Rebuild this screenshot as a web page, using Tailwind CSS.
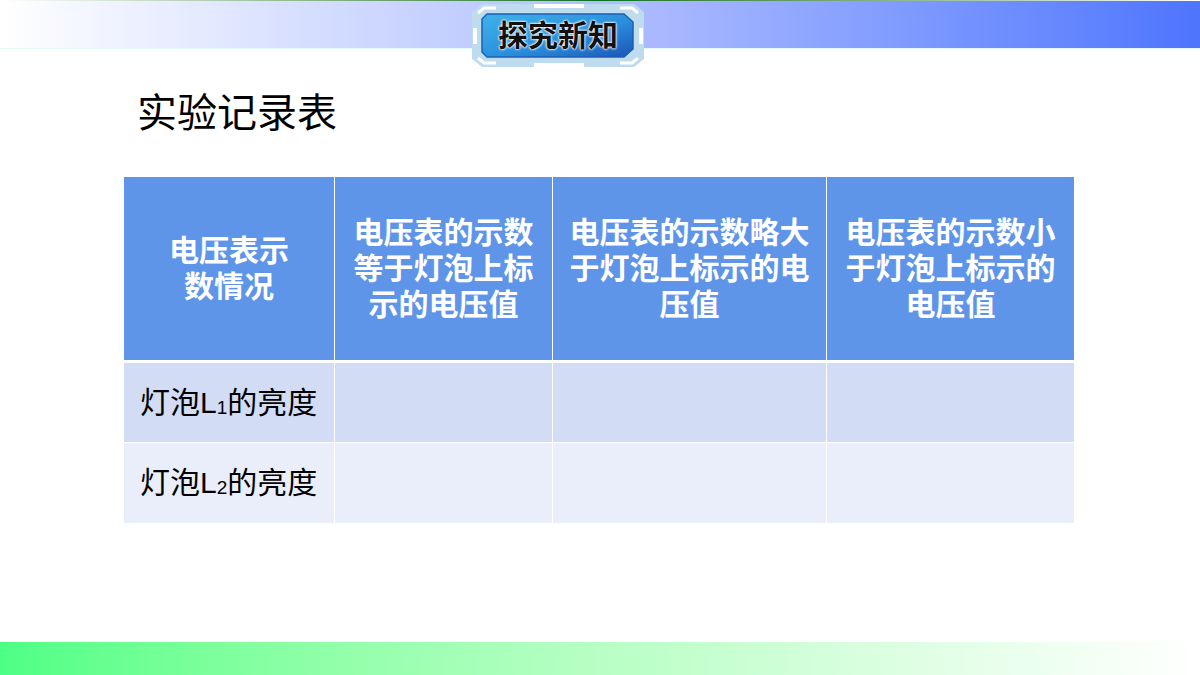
<!DOCTYPE html>
<html lang="zh">
<head>
    <meta charset="UTF-8">
    <title>实验记录表</title>
    <script src="https://cdn.jsdelivr.net/npm/@tailwindcss/browser@4"></script>
</head>
<body class="bg-white font-['Liberation_Sans','Noto_Sans_CJK_SC',sans-serif]">
    <div class="relative flex h-[675px] w-[1200px] flex-col overflow-hidden">
        <!-- top bar -->
        <div class="h-[49px] shrink-0 border-b border-[#e4fbf4] bg-gradient-to-r from-white via-[#a9b8ff] via-55% to-[#4f74fd]">
            <div class="h-px bg-gradient-to-r from-white via-[#00701f] to-[#fff] via-50%"></div>
        </div>

        <!-- badge -->
        <div class="absolute left-[472px] top-[4px] flex h-[63px] w-[172px] items-center justify-center">
            <svg class="absolute inset-0" width="172" height="63" viewBox="0 0 172 63" fill="none">
                <defs>
                    <linearGradient id="panel" x1="0" y1="0" x2="1" y2="1">
                        <stop offset="0" stop-color="#3fb2ea"/>
                        <stop offset="0.55" stop-color="#2b8fdc"/>
                        <stop offset="1" stop-color="#1c55b8"/>
                    </linearGradient>
                </defs>
                <path d="M10 0H162L172 8V55L162 63H10L0 55V8Z" fill="#bfdcee"/>
                <path d="M6 9L12 4H24" stroke="#fff" stroke-width="3"/>
                <path d="M166 9L160 4H148" stroke="#fff" stroke-width="3"/>
                <path d="M6 54L12 59H24" stroke="#fff" stroke-width="3"/>
                <path d="M166 54L160 59H148" stroke="#fff" stroke-width="3"/>
                <path d="M62 2H112" stroke="#fff" stroke-width="4"/>
                <path d="M62 61H112" stroke="#fff" stroke-width="4"/>
                <path d="M3 24V40M169 24V40" stroke="#fff" stroke-width="4"/>
                <path d="M15 10H152L161 18V45L152 53H15L10 48V15Z" fill="url(#panel)" stroke="#1d5fb4" stroke-width="1.5"/>
            </svg>
            <span class="relative text-[30px] leading-none font-bold text-[#111] [text-shadow:0_0_2px_#fff,0_0_2px_#fff,0_0_3px_#fff]">探究新知</span>
        </div>

        <!-- title -->
        <h1 class="mt-[39px] ml-[137px] text-[40px] leading-[50px] font-normal text-black">实验记录表</h1>

        <!-- table -->
        <div class="mt-[39px] ml-[124px] grid w-[950px] grid-cols-[210px_218px_274px_248px] grid-rows-[183px_3px_79px_1px_80px] text-[30px] leading-[36px]">
            <div class="flex items-center justify-center bg-[#5f95e8] px-4 text-center font-bold text-white">电压表示<br>数情况</div>
            <div class="flex items-center justify-center border-l border-white bg-[#5f95e8] px-4 text-center font-bold text-white">电压表的示数等于灯泡上标示的电压值</div>
            <div class="flex items-center justify-center border-l border-white bg-[#5f95e8] px-4 text-center font-bold text-white">电压表的示数略大于灯泡上标示的电压值</div>
            <div class="flex items-center justify-center border-l border-white bg-[#5f95e8] px-4 text-center font-bold text-white">电压表的示数小于灯泡上标示的电压值</div>

            <div class="col-span-4 bg-white"></div>

            <div class="flex items-center bg-[#d2dcf5] pl-4 text-black">灯泡L<sub class="text-[19px] leading-none">1</sub>的亮度</div>
            <div class="border-l border-white bg-[#d2dcf5]"></div>
            <div class="border-l border-white bg-[#d2dcf5]"></div>
            <div class="border-l border-white bg-[#d2dcf5]"></div>

            <div class="col-span-4 bg-white"></div>

            <div class="flex items-center bg-[#eaeefa] pl-4 text-black">灯泡L<sub class="text-[19px] leading-none">2</sub>的亮度</div>
            <div class="border-l border-white bg-[#eaeefa]"></div>
            <div class="border-l border-white bg-[#eaeefa]"></div>
            <div class="border-l border-white bg-[#eaeefa]"></div>
        </div>

        <!-- bottom bar -->
        <div class="mt-auto h-[33px] shrink-0 bg-gradient-to-r from-[#4dff85] to-white"></div>
    </div>
</body>
</html>
